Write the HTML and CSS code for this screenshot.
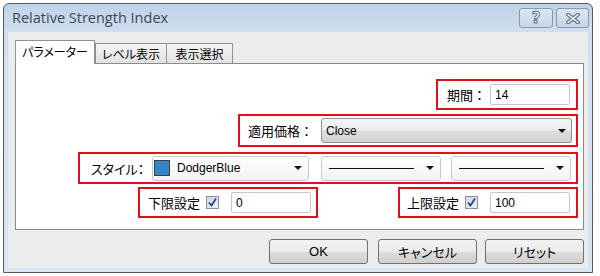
FILE: index.html
```html
<!DOCTYPE html>
<html lang="ja">
<head>
  <meta charset="UTF-8">
  <title>Relative Strength Index</title>
  <link rel="stylesheet" href="styles.css">
</head>
<body>

  <div class="window">
    <div class="titlebar">
      <span class="title">Relative Strength Index</span>
      <div class="caption-btns">
        <span class="cap-btn help">?</span>
        <span class="cap-btn close">
          <svg width="14" height="11" viewBox="0 0 14 11">
            <path d="M2 1.5 L12 9.5 M12 1.5 L2 9.5" stroke="#66768a" stroke-width="4" stroke-linecap="round"/>
            <path d="M2 1.5 L12 9.5 M12 1.5 L2 9.5" stroke="#f4f7fb" stroke-width="1.6" stroke-linecap="round"/>
          </svg>
        </span>
      </div>
    </div>

    <div class="client">
      <div class="tabs">
        <div class="tab active">パラメーター</div>
        <div class="tab tab-level">レベル表示</div>
        <div class="tab tab-view">表示選択</div>
      </div>

      <div class="panel">
        <div class="box box-period">
          <span class="label">期間：</span>
          <span class="input input-period">14</span>
        </div>

        <div class="box box-price">
          <span class="label">適用価格：</span>
          <span class="select select-price">Close<i class="arrow"></i></span>
        </div>

        <div class="box box-style">
          <span class="label label-style">スタイル：</span>
          <span class="select light select-color"><i class="swatch"></i>DodgerBlue<i class="arrow"></i></span>
          <span class="select light select-line"><i class="line"></i><i class="arrow"></i></span>
          <span class="select light select-line last"><i class="line"></i><i class="arrow"></i></span>
        </div>

        <div class="row-levels">
          <div class="box box-level">
            <span class="label">下限設定</span>
            <span class="check"><svg width="11" height="11" viewBox="0 0 11 11"><path d="M2 5.5 L4.5 8.5 L9 1.5" stroke="#2a4585" stroke-width="1.8" fill="none"/></svg></span>
            <span class="input input-level">0</span>
          </div>
          <div class="box box-level upper">
            <span class="label">上限設定</span>
            <span class="check"><svg width="11" height="11" viewBox="0 0 11 11"><path d="M2 5.5 L4.5 8.5 L9 1.5" stroke="#2a4585" stroke-width="1.8" fill="none"/></svg></span>
            <span class="input input-level">100</span>
          </div>
        </div>
      </div>

      <div class="buttons">
        <button class="btn">OK</button>
        <button class="btn btn-cancel">キャンセル</button>
        <button class="btn btn-reset">リセット</button>
      </div>
    </div>
  </div>

</body>
</html>
```

FILE: styles.css
```css
body {
  margin: 0;
  background: #fff;
  font-family: "Liberation Sans", "Noto Sans CJK JP", sans-serif;
  font-size: 12px;
  color: #000;
}
.window {
  margin: 3px 0 0 3px;
  width: 590px;
  height: 270px;
  box-sizing: border-box;
  border: 1px solid #5b5b5b;
  border-radius: 6px 6px 0 0;
  background: linear-gradient(#bfd2e7, #d0dfee 28px, #dae5f1);
  display: flex;
  flex-direction: column;
  overflow: hidden;
}
.titlebar {
  height: 28px;
  box-sizing: border-box;
  padding: 4px 3px 0 8px;
  display: flex;
  align-items: flex-start;
}
.title {
  flex: 1;
  font-family: "Open Sans", sans-serif;
  font-size: 14.5px;
  line-height: 20px;
  color: #3b4959;
}
.caption-btns {
  display: flex;
  gap: 3px;
}
.cap-btn {
  width: 34px;
  height: 20px;
  box-sizing: border-box;
  border: 1px solid #8699ae;
  border-radius: 3px;
  background: linear-gradient(#dde7f2, #c5d5e7);
  display: flex;
  align-items: center;
  justify-content: center;
}
.cap-btn.close {
  width: 33px;
}
.help {
  font-family: "DejaVu Sans", sans-serif;
  font-weight: bold;
  font-size: 15px;
  color: #f4f7fb;
  -webkit-text-stroke: 1px #66768a;
}
.client {
  flex: 1;
  margin: 0 4px 4px 4px;
  padding: 8px 4px 4px 7px;
  background: #ececec;
  display: flex;
  flex-direction: column;
}
.tabs {
  height: 23px;
  display: flex;
  align-items: flex-end;
  position: relative;
  z-index: 1;
}
.tab {
  height: 20px;
  box-sizing: border-box;
  border: 1px solid #8e9196;
  border-bottom: none;
  background: linear-gradient(#f4f4f4, #e2e2e2);
  font-family: "Noto Sans CJK JP", sans-serif;
  font-size: 12px;
  font-feature-settings: "palt";
  display: flex;
  align-items: center;
  justify-content: center;
}
.tab.active {
  width: 80px;
  height: 24px;
  margin-bottom: -1px;
  background: #fff;
  padding-bottom: 2px;
}
.tab-level {
  width: 72px;
}
.tab-view {
  width: 67px;
  margin-left: -1px;
}
.panel {
  height: 167px;
  box-sizing: border-box;
  border: 1px solid #898c95;
  background: #fff;
  padding: 15px 5px 0 0;
  display: flex;
  flex-direction: column;
  align-items: flex-end;
}
.box {
  box-sizing: border-box;
  border: 2px solid #e3101c;
  display: flex;
  align-items: center;
}
.label {
  font-family: "Noto Sans CJK JP", sans-serif;
  font-size: 13px;
}
.box-period {
  width: 142px;
  height: 31px;
  padding: 0 6px 0 9px;
}
.box-price {
  width: 340px;
  height: 33px;
  margin-top: 4px;
  padding: 0 4px 0 8px;
}
.box-style {
  width: 500px;
  height: 32px;
  margin-top: 5px;
  padding: 0 5px 0 11px;
}
.label-style {
  width: 61px;
  font-feature-settings: "palt";
}
.row-levels {
  margin-top: 3px;
  display: flex;
  gap: 80px;
}
.box-level {
  width: 180px;
  height: 31px;
  padding: 0 5px 0 8px;
}
.box-level.upper {
  padding: 0 6px 0 7px;
}
.input {
  height: 21px;
  box-sizing: border-box;
  border: 1px solid #c3c6cc;
  border-radius: 2px;
  background: #fff;
  padding-left: 4px;
  display: flex;
  align-items: center;
  margin-left: auto;
}
.input-period {
  width: 80px;
}
.input-level {
  width: 80px;
}
.check {
  width: 13px;
  height: 13px;
  margin-left: 6px;
  box-sizing: border-box;
  border: 1px solid #8f8f8f;
  background: linear-gradient(135deg, #cfd8e6, #eef2f7);
  display: flex;
  align-items: center;
  justify-content: center;
}
.select {
  height: 25px;
  box-sizing: border-box;
  border: 1px solid #8f9092;
  border-radius: 3px;
  background: linear-gradient(#f5f5f5, #ebebeb 50%, #dddddd 51%, #d2d2d2);
  padding: 0 5px 0 4px;
  display: flex;
  align-items: center;
}
.select-price {
  width: 251px;
  margin-left: auto;
}
.select.light {
  border-color: #c9cacc;
  background: linear-gradient(#fefefe, #f3f3f3);
}
.select-color {
  width: 157px;
  padding-left: 1px;
  padding-right: 6px;
}
.select-line {
  width: 120px;
  margin-left: 12px;
  padding-left: 7px;
  padding-right: 6px;
}
.select-line.last {
  margin-left: 10px;
}
.arrow {
  margin-left: auto;
  width: 0;
  height: 0;
  border-left: 4px solid transparent;
  border-right: 4px solid transparent;
  border-top: 4px solid #111;
}
.swatch {
  width: 16px;
  height: 16px;
  box-sizing: border-box;
  border: 1px solid #3d3d3d;
  background: #3585cc;
  margin-right: 7px;
}
.line {
  width: 85px;
  height: 1px;
  background: #111;
}
.buttons {
  margin-top: 9px;
  display: flex;
  justify-content: flex-end;
  gap: 10px;
}
.btn {
  width: 99px;
  height: 25px;
  box-sizing: border-box;
  border: 1px solid #707070;
  border-radius: 3px;
  background: linear-gradient(#f3f3f3, #ebebeb 50%, #dddddd 51%, #cfcfcf);
  font-family: "Liberation Sans", "Noto Sans CJK JP", sans-serif;
  font-size: 13px;
  font-feature-settings: "palt";
  color: #000;
  padding: 0;
}
.btn-reset {
  margin-left: -2px;
}
```
